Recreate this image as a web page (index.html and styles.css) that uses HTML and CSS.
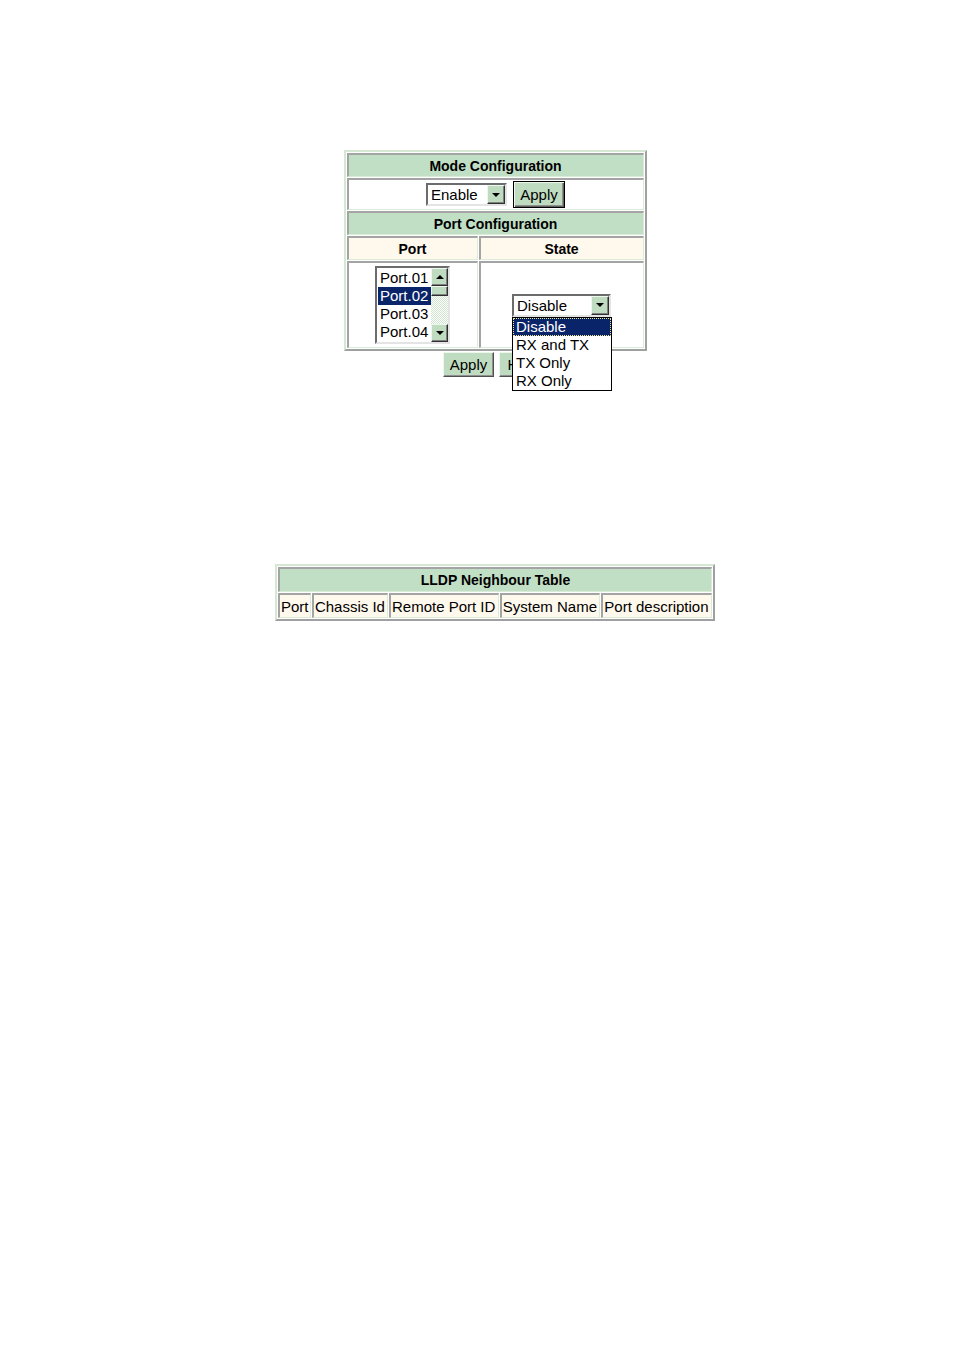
FILE: index.html
```html
<!DOCTYPE html>
<html>
<head>
<meta charset="utf-8">
<title>LLDP</title>
<link rel="stylesheet" href="styles.css">
</head>
<body>
<div class="page">
  <div class="cfg">
    <table class="grid cfg-table">
      <tr><td colspan="2" class="hdr">Mode Configuration</td></tr>
      <tr>
        <td colspan="2" class="mode-cell">
          <div class="mode-row">
            <div class="select sel-mode">
              <span class="sel-text">Enable</span>
              <span class="arrow-btn"><span class="tri-down"></span></span>
            </div>
            <button class="btn btn-default">Apply</button>
          </div>
        </td>
      </tr>
      <tr><td colspan="2" class="hdr">Port Configuration</td></tr>
      <tr>
        <td class="sub port-col">Port</td>
        <td class="sub">State</td>
      </tr>
      <tr>
        <td class="body-cell">
          <div class="listbox">
            <div class="options">
              <div class="opt">Port.01</div>
              <div class="opt sel">Port.02</div>
              <div class="opt">Port.03</div>
              <div class="opt">Port.04</div>
            </div>
            <div class="vscroll">
              <span class="sb-btn"><span class="tri-up"></span></span>
              <span class="sb-thumb"></span>
              <span class="sb-track"></span>
              <span class="sb-btn"><span class="tri-down"></span></span>
            </div>
          </div>
        </td>
        <td class="body-cell">
          <div class="select sel-state">
            <span class="sel-text">Disable</span>
            <span class="arrow-btn"><span class="tri-down"></span></span>
            <div class="dropdown">
              <div class="dd-item dd-sel">Disable</div>
              <div class="dd-item">RX and TX</div>
              <div class="dd-item">TX Only</div>
              <div class="dd-item">RX Only</div>
            </div>
          </div>
        </td>
      </tr>
    </table>
    <div class="btn-row">
      <button class="btn btn-apply">Apply</button>
      <button class="btn btn-help">Help</button>
    </div>
  </div>

  <table class="grid lldp">
    <tr><td colspan="5" class="hdr">LLDP Neighbour Table</td></tr>
    <tr>
      <td class="c">Port</td>
      <td class="c">Chassis Id</td>
      <td class="c">Remote Port ID</td>
      <td class="c">System Name</td>
      <td class="c">Port description</td>
    </tr>
  </table>
</div>
</body>
</html>
```

FILE: styles.css
```css
* { box-sizing: border-box; }

body {
  margin: 0;
  background: #ffffff;
  font-family: "Liberation Sans", Arial, Helvetica, sans-serif;
  font-size: 15px;
  color: #000000;
}

.page {
  padding: 150px 0 0 36px;
}

.cfg {
  width: 303px;
  margin: 0 auto;
  position: relative;
}

table.grid {
  border-collapse: separate;
  border-spacing: 1px;
  border-style: solid;
  border-width: 2px;
  border-color: #d4e8d4 #a0a0a0 #a0a0a0 #d4e8d4;
}

.grid td {
  border-style: solid;
  border-width: 2px 1px 1px 2px;
  border-color: #a4a4a4 #d8ecd8 #d8ecd8 #a4a4a4;
  padding: 0;
  vertical-align: middle;
}

.cfg-table {
  width: 303px;
}

.hdr {
  background: #c1dfc5;
  font-weight: bold;
  font-size: 14px;
  text-align: center;
  height: 24px;
}

.mode-cell {
  background: #ffffff;
  height: 32px;
}

.mode-row {
  display: flex;
  justify-content: center;
  align-items: center;
  gap: 6px;
}

.sub {
  background: #fff8ec;
  font-weight: bold;
  font-size: 14px;
  text-align: center;
  height: 24px;
}

.port-col {
  width: 131px;
}

.body-cell {
  background: #ffffff;
  height: 87px;
  text-align: center;
}

/* select */
.select {
  position: relative;
  display: inline-flex;
  align-items: center;
  background: #ffffff;
  border-style: solid;
  border-width: 2px;
  border-color: #6c6c6c #e4e4e4 #e4e4e4 #6c6c6c;
  text-align: left;
}

.sel-mode {
  width: 81px;
  height: 23px;
}

.sel-state {
  width: 99px;
  height: 23px;
}

.sel-text {
  flex: 1;
  padding-left: 3px;
  line-height: 17px;
}

.arrow-btn {
  width: 18px;
  height: 19px;
  background: #c0dcc0;
  border-style: solid;
  border-width: 1px;
  border-color: #eef7ee #303030 #303030 #eef7ee;
  box-shadow: inset -1px -1px 0 #808080;
  display: flex;
  align-items: center;
  justify-content: center;
}

.tri-down {
  width: 0;
  height: 0;
  border-left: 4px solid transparent;
  border-right: 4px solid transparent;
  border-top: 4px solid #000000;
}

.tri-up {
  width: 0;
  height: 0;
  border-left: 4px solid transparent;
  border-right: 4px solid transparent;
  border-bottom: 4px solid #000000;
}

/* buttons */
.btn {
  font-family: "Liberation Sans", Arial, Helvetica, sans-serif;
  font-size: 15px;
  color: #000000;
  background: #c0dcc0;
  border-style: solid;
  border-width: 1px;
  border-color: #eef7ee #505050 #505050 #eef7ee;
  box-shadow: inset -1px -1px 0 #909090;
  padding: 0;
  margin: 0;
  line-height: 17px;
}

.btn-default {
  width: 52px;
  height: 27px;
  border: 1px solid #000000;
  box-shadow: inset 1px 1px 0 #eef7ee, inset -1px -1px 0 #606060, inset -2px -2px 0 #909090;
}

.btn-row {
  display: flex;
  justify-content: center;
  gap: 5px;
  margin-top: 1px;
}

.btn-apply {
  width: 51px;
  height: 25px;
}

.btn-help {
  width: 48px;
  height: 25px;
}

/* listbox */
.listbox {
  display: inline-flex;
  width: 75px;
  height: 78px;
  border-style: solid;
  border-width: 2px;
  border-color: #6c6c6c #e4e4e4 #e4e4e4 #6c6c6c;
  background: #ffffff;
  text-align: left;
  vertical-align: middle;
}

.options {
  width: 54px;
  padding: 1px 0 0 1px;
}

.opt {
  height: 18px;
  line-height: 18px;
  padding-left: 2px;
  white-space: nowrap;
}

.opt.sel {
  background: #0a246a;
  color: #ffffff;
}

.vscroll {
  width: 17px;
  display: flex;
  flex-direction: column;
}

.sb-btn {
  height: 18px;
  background: #c0dcc0;
  border-style: solid;
  border-width: 1px;
  border-color: #eef7ee #303030 #303030 #eef7ee;
  box-shadow: inset -1px -1px 0 #808080;
  display: flex;
  align-items: center;
  justify-content: center;
}

.sb-thumb {
  height: 10px;
  background: #c0dcc0;
  border-style: solid;
  border-width: 1px;
  border-color: #eef7ee #303030 #303030 #eef7ee;
  box-shadow: inset -1px -1px 0 #808080;
}

.sb-track {
  flex: 1;
  background-color: #ffffff;
  background-image: repeating-conic-gradient(#cfe5cf 0 25%, #ffffff 0 50%);
  background-size: 2px 2px;
}

/* dropdown */
.dropdown {
  position: absolute;
  z-index: 5;
  left: -2px;
  top: calc(100% + 2px);
  width: 100px;
  background: #ffffff;
  border: 1px solid #000000;
}

.dd-item {
  height: 18px;
  line-height: 18px;
  padding-left: 3px;
  white-space: nowrap;
}

.dd-sel {
  background: #0a246a;
  color: #ffffff;
  outline: 1px dotted #f0e890;
  outline-offset: -1px;
}

/* LLDP table */
.lldp {
  width: 440px;
  margin: 187px auto 0;
}

.lldp .hdr {
  height: 25px;
}

.lldp .c {
  background: #fff8ec;
  height: 25px;
  padding: 0 1px;
  white-space: nowrap;
}
```
